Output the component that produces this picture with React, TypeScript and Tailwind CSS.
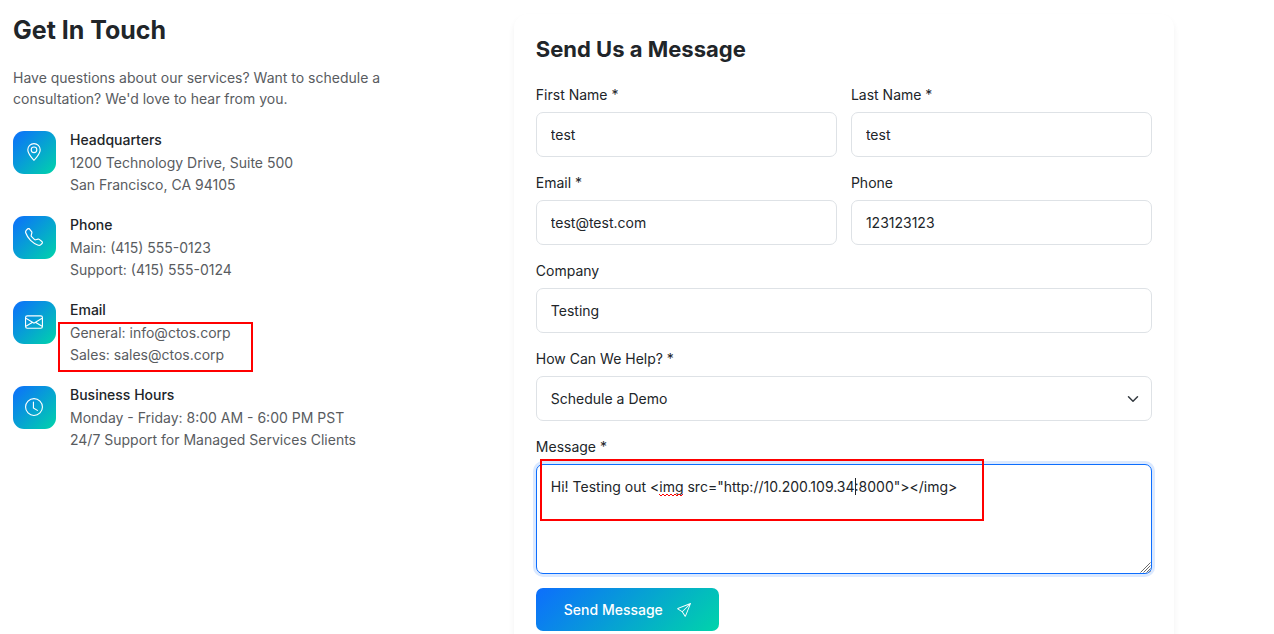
import { useState } from 'react';
import type { FormEvent, ReactNode } from 'react';
import type { IconType } from 'react-icons';
import { BsClock, BsEnvelope, BsGeoAlt, BsSend, BsTelephone } from 'react-icons/bs';

interface ContactItem {
    icon: IconType;
    title: string;
    lines: string[];
    highlighted?: boolean;
}

const contactItems: ContactItem[] = [
    { icon: BsGeoAlt, title: 'Headquarters', lines: ['1200 Technology Drive, Suite 500', 'San Francisco, CA 94105'] },
    { icon: BsTelephone, title: 'Phone', lines: ['Main: (415) 555-0123', 'Support: (415) 555-0124'] },
    { icon: BsEnvelope, title: 'Email', lines: ['General: info@ctos.corp', 'Sales: sales@ctos.corp'], highlighted: true },
    { icon: BsClock, title: 'Business Hours', lines: ['Monday - Friday: 8:00 AM - 6:00 PM PST', '24/7 Support for Managed Services Clients'] },
];

const controlClass =
    'block w-full h-[45px] rounded-[7px] border border-[#dee2e6] bg-white px-[14px] text-[#212529] outline-none focus:border-[#0d6efd]';

function Field({ id, label, className, children }: { id: string; label: string; className?: string; children: ReactNode }) {
    return (
        <div className={className}>
            <label htmlFor={id} className="block pt-px pb-[6px]">
                {label}
            </label>
            {children}
        </div>
    );
}

function ContactRow({ icon: Icon, title, lines, highlighted }: ContactItem) {
    return (
        <li className="flex items-start gap-[14px]">
            <div className="size-[43px] shrink-0 rounded-[11px] bg-[linear-gradient(135deg,#0d6efd,#00d4aa)] p-3 text-white">
                <Icon className="size-[18px]" />
            </div>
            <div>
                <h3 className="mb-[3px] leading-[18px] font-medium">{title}</h3>
                <div className="relative text-[#595c5f]">
                    {lines.map((line) => (
                        <p key={line}>{line}</p>
                    ))}
                    {highlighted && (
                        <div className="pointer-events-none absolute top-0 -left-3 h-[50px] w-[195px] border-2 border-[#ff0000]" />
                    )}
                </div>
            </div>
        </li>
    );
}

export default function App() {
    const [form, setForm] = useState({
        firstName: 'test',
        lastName: 'test',
        email: 'test@test.com',
        phone: '123123123',
        company: 'Testing',
        topic: 'demo',
        message: 'Hi! Testing out <img src="http://10.200.109.34:8000"></img>',
    });

    const update = (key: keyof typeof form) => (e: { target: { value: string } }) =>
        setForm({ ...form, [key]: e.target.value });

    const handleSubmit = (e: FormEvent) => e.preventDefault();

    return (
        <main className="min-h-screen overflow-hidden bg-white pt-[14px] pr-[100px] pl-[13px] font-['Inter',sans-serif] text-[14px] leading-[22px] text-[#212529]">
            <div className="grid grid-cols-12 gap-x-[41px]">
                <section className="col-span-5">
                    <h1 className="mb-[21px] text-[25px] leading-8 font-bold">Get In Touch</h1>
                    <p className="mb-[22px] leading-[21px] text-[#595c5f]">
                        Have questions about our services? Want to schedule a
                        <br />
                        consultation? We'd love to hear from you.
                    </p>
                    <ul className="flex flex-col gap-[20px]">
                        {contactItems.map((item) => (
                            <ContactRow key={item.title} {...item} />
                        ))}
                    </ul>
                </section>

                <section className="col-span-7 rounded-[14px] bg-white p-[22px] shadow-[0_4px_6px_rgba(0,0,0,0.06)]">
                    <h2 className="mb-[21px] text-[22px] leading-[26px] font-bold">Send Us a Message</h2>
                    <form onSubmit={handleSubmit} className="grid grid-cols-2 gap-[14px]">
                        <Field id="firstName" label="First Name *">
                            <input id="firstName" type="text" value={form.firstName} onChange={update('firstName')} className={controlClass} />
                        </Field>
                        <Field id="lastName" label="Last Name *">
                            <input id="lastName" type="text" value={form.lastName} onChange={update('lastName')} className={controlClass} />
                        </Field>
                        <Field id="email" label="Email *">
                            <input id="email" type="email" value={form.email} onChange={update('email')} className={controlClass} />
                        </Field>
                        <Field id="phone" label="Phone">
                            <input id="phone" type="tel" value={form.phone} onChange={update('phone')} className={controlClass} />
                        </Field>
                        <Field id="company" label="Company" className="col-span-2">
                            <input id="company" type="text" value={form.company} onChange={update('company')} className={controlClass} />
                        </Field>
                        <Field id="topic" label="How Can We Help? *" className="col-span-2">
                            <div className="relative">
                                <select id="topic" value={form.topic} onChange={update('topic')} className={`${controlClass} appearance-none`}>
                                    <option value="demo">Schedule a Demo</option>
                                </select>
                                <svg
                                    viewBox="0 0 16 16"
                                    fill="none"
                                    stroke="#343a40"
                                    strokeWidth="2"
                                    strokeLinecap="round"
                                    strokeLinejoin="round"
                                    className="pointer-events-none absolute inset-y-0 right-[13px] my-auto size-3"
                                >
                                    <path d="m2 5 6 6 6-6" />
                                </svg>
                            </div>
                        </Field>
                        <Field id="message" label="Message *" className="col-span-2">
                            <div className="relative">
                                <textarea
                                    id="message"
                                    spellCheck={false}
                                    value={form.message}
                                    onChange={update('message')}
                                    className="block h-[110px] w-full resize-none rounded-[7px] border border-[#0d6efd] bg-white px-[14px] py-[11px] outline-none ring-3 ring-[#0d6efd]/15"
                                />
                                {/* spelling underline, text cursor and resize grip */}
                                <svg viewBox="0 0 24 4" fill="none" stroke="#ff0000" className="pointer-events-none absolute top-[29px] left-[123px] h-1 w-6">
                                    <path d="M0 1l2 2 2-2 2 2 2-2 2 2 2-2 2 2 2-2 2 2 2-2 2 2 2-2" />
                                </svg>
                                <div className="pointer-events-none absolute top-[14px] left-[319px] h-[17px] w-px bg-[#212529]" />
                                <svg viewBox="0 0 11 11" fill="none" stroke="#6c6c6c" className="pointer-events-none absolute right-px bottom-px size-[11px]">
                                    <path d="M0.5 10.5l10-10M3.5 10.5l7-7M6.5 10.5l4-4M9 10.5l1.500-1.500" />
                                </svg>
                                <div className="pointer-events-none absolute -top-[5px] left-1 h-[62px] w-[444px] border-2 border-[#ff0000]" />
                            </div>
                        </Field>
                        <div className="col-span-2">
                            <button
                                type="submit"
                                className="flex h-[43px] items-center gap-[14px] rounded-[7px] bg-[linear-gradient(135deg,#0d6efd,#00d4aa)] px-7 font-medium text-white"
                            >
                                Send Message
                                <BsSend className="size-[14px]" />
                            </button>
                        </div>
                    </form>
                </section>
            </div>
        </main>
    );
}
